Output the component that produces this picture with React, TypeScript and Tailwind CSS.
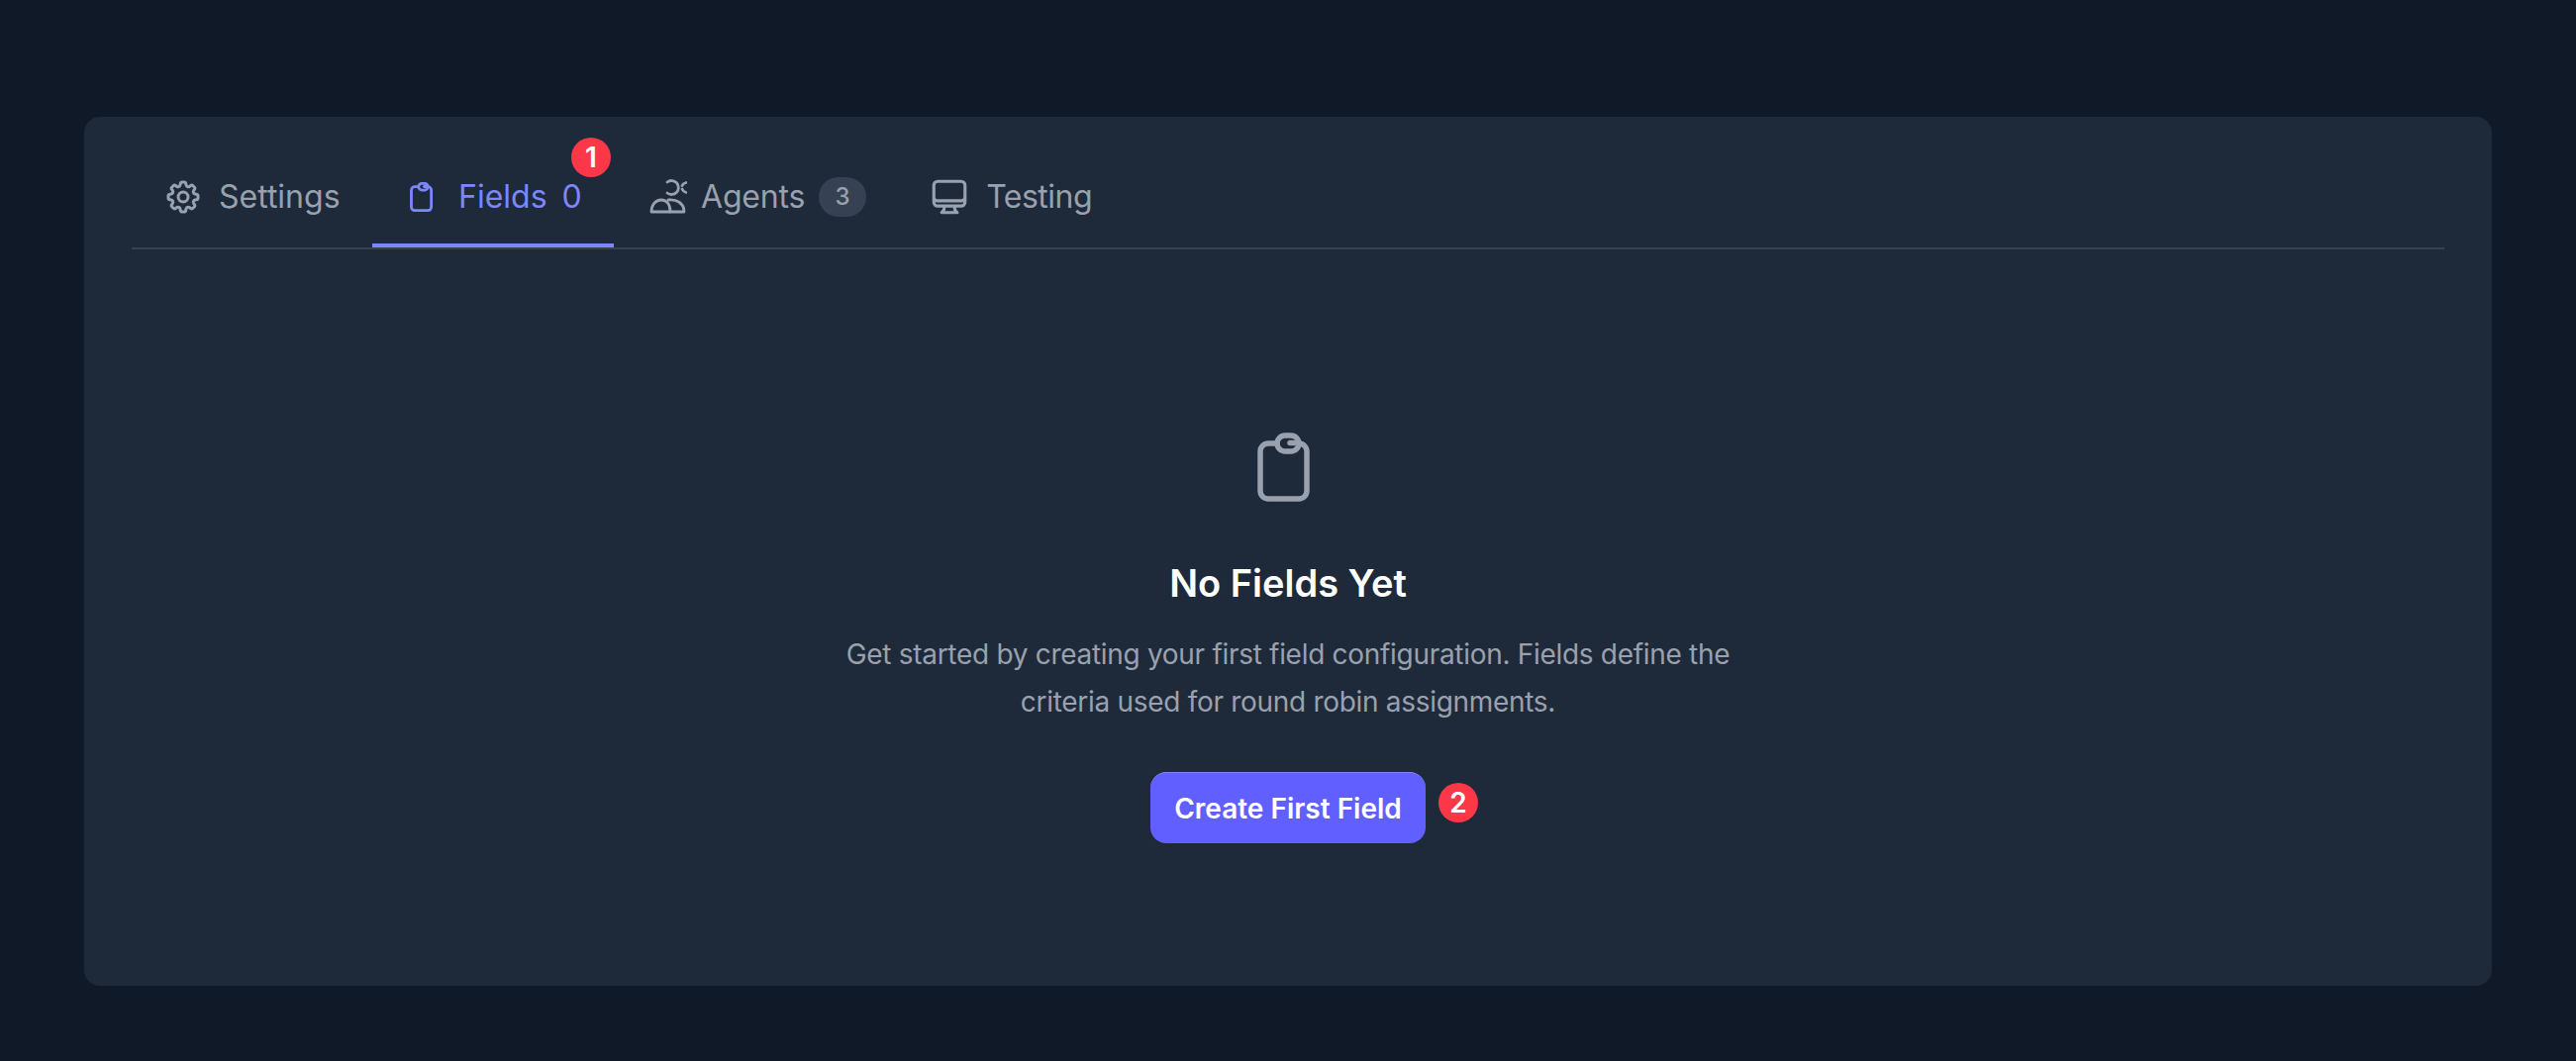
import { HiOutlineCog8Tooth, HiOutlineComputerDesktop } from 'react-icons/hi2';

function ClipboardIcon({ className, strokeWidth = 5.5 }: { className?: string; strokeWidth?: number }) {
  return (
    <svg className={className} viewBox="0 0 62 70" fill="none" stroke="currentColor" strokeWidth={strokeWidth} strokeLinejoin="round" strokeLinecap="round">
      <path d="M20 11H11A8 8 0 0 0 3 19V59A8 8 0 0 0 11 67H42A8 8 0 0 0 50 59V19A8 8 0 0 0 42 11" />
      <rect x="20" y="3" width="22" height="16" rx="8" />
      <path d="M33 10.5h5" />
    </svg>
  );
}

function AgentsIcon({ className }: { className?: string }) {
  return (
    <svg className={className} viewBox="4 8 38 36" fill="none" stroke="currentColor" strokeWidth="2.8" strokeLinejoin="round" strokeLinecap="round">
      <path d="M22 11a7 7 0 1 1 0 11" />
      <path d="M41 11.5a6 6 0 0 0-4 3M37 18a6 6 0 0 0 4 3.5" />
      <path d="M6 41c0-7 4-12 10-12 5 0 9 4 9 12Z" />
      <path d="M23 29c8-1 16 3 16 12H25" />
    </svg>
  );
}

const tabBase = 'flex h-[132px] items-center border-b-4 pt-[34px]';

export default function App() {
  return (
    <div className="min-h-screen bg-[#0f1928] px-[85px] pt-[118px] font-['Inter',sans-serif]">
      <div className="h-[878px] w-[2432px] rounded-[16px] bg-[#1e2939] px-[48px]">
        <div className="flex h-[134px] border-b-2 border-[#364153] text-[32px] leading-[48px]">
          <div className={`${tabBase} w-[243px] gap-[16px] border-transparent pl-[32px] text-[#99a1af]`}>
            <HiOutlineCog8Tooth className="h-[40px] w-[40px]" strokeWidth={1.8} />
            <span>Settings</span>
          </div>
          <div className={`${tabBase} relative w-[244px] gap-[22px] border-[#7c86ff] pl-[38px] text-[#7c86ff]`}>
            <ClipboardIcon className="h-[30px] w-[27px]" strokeWidth={6.5} />
            <span>Fields</span>
            <span className="ml-[-7px]">0</span>
            <span className="absolute left-[201px] top-[21px] flex h-[40px] w-[40px] items-center justify-center rounded-full bg-[#fb3748] text-[28px] font-semibold text-white">1</span>
          </div>
          <div className={`${tabBase} gap-[14px] border-transparent pl-[36px] text-[#99a1af]`}>
            <AgentsIcon className="h-[36px] w-[38px]" />
            <span className="tracking-[-0.2px]">Agents</span>
            <span className="flex h-[40px] w-[48px] items-center justify-center rounded-full bg-[#364153] text-[24px] font-medium">3</span>
          </div>
          <div className={`${tabBase} gap-[16px] border-transparent pl-[63px] text-[#99a1af]`}>
            <HiOutlineComputerDesktop className="h-[42px] w-[42px]" strokeWidth={1.8} />
            <span className="tracking-[-0.5px]">Testing</span>
          </div>
        </div>
        <div className="flex flex-col items-center pt-[185px]">
          <ClipboardIcon className="h-[70px] w-[62px] text-[#99a1af]" />
          <h3 className="mt-[54px] text-[38px] font-semibold leading-[56px] text-white">No Fields Yet</h3>
          <p className="mt-[20px] w-[960px] text-center text-[28px] leading-[48px] tracking-[-0.3px] text-[#99a1af]">
            Get started by creating your first field configuration. Fields define the criteria used for round robin assignments.
          </p>
          <div className="relative mt-[47px]">
            <button className="h-[72px] w-[278px] rounded-[16px] border-t border-[#7c86ff] bg-[#615fff] text-[28px] font-semibold text-white">Create First Field</button>
            <span className="absolute left-[291px] top-[11px] flex h-[40px] w-[40px] items-center justify-center rounded-full bg-[#fb3748] text-[28px] font-semibold text-white">2</span>
          </div>
        </div>
      </div>
    </div>
  );
}
